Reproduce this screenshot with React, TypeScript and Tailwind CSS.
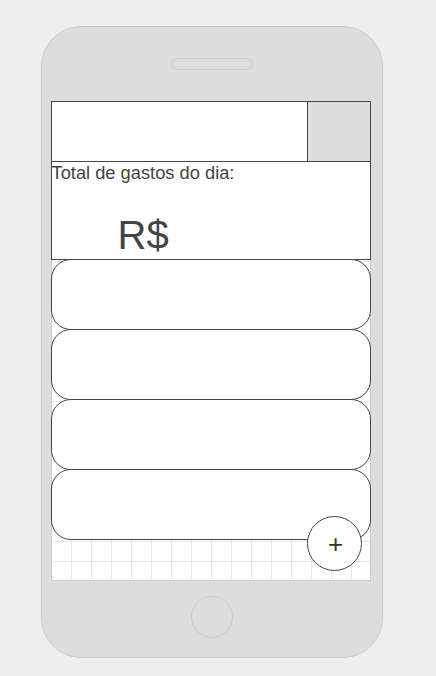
import React from 'react';

const cards = [1, 2, 3, 4];

const App: React.FC = () => {
  return (
    <div className="w-[436px] h-[676px] bg-[#eeeeee] pt-[26px] pl-[41px] font-['Liberation_Sans',Arial,sans-serif]">
      {/* Phone body */}
      <div className="w-[342px] h-[632px] rounded-[40px] border border-[#cccccc] bg-[#dddddd] flex flex-col items-center">
        {/* Speaker */}
        <div className="mt-[31px] w-[82px] h-[12px] rounded-full border border-[#cccccc]" />

        {/* Screen */}
        <div className="mt-[31px] -ml-[3px] w-[320px] h-[480px] border border-[#cccccc] bg-white bg-[linear-gradient(to_right,#e6e6e6_1px,transparent_1px),linear-gradient(to_bottom,#e6e6e6_1px,transparent_1px)] bg-[size:20px_20px] bg-[position:-1px_-1px] relative flex flex-col">
          {/* Header */}
          <div className="-mx-[1px] -mt-[1px] h-[61px] border border-[#444444] bg-white flex">
            <div className="flex-1" />
            <div className="w-[63px] border-l border-[#444444] bg-[#dddddd]" />
          </div>

          {/* Daily total */}
          <div className="-mx-[1px] -mt-[1px] h-[99px] border border-[#444444] bg-white flex flex-col text-[#444444]">
            <span className="text-[18.3px] leading-[21px]">Total de gastos do dia:</span>
            <span className="text-[40px] leading-[46px] ml-[66px] mt-[29px]">R$</span>
          </div>

          {/* Expense cards */}
          {cards.map((c) => (
            <div
              key={c}
              className="-mx-[1px] -mt-[1px] h-[71px] rounded-[20px] border border-[#444444] bg-white"
            />
          ))}

          {/* Add button */}
          <button className="absolute left-[255px] top-[414px] w-[55px] h-[55px] rounded-full border border-[#444444] bg-white text-[#333333] text-[26px] leading-none flex items-center justify-center pl-[3px]">
            +
          </button>
        </div>

        {/* Home button */}
        <div className="mt-[15px] w-[42px] h-[42px] rounded-full border border-[#cccccc]" />
      </div>
    </div>
  );
};

export default App;
